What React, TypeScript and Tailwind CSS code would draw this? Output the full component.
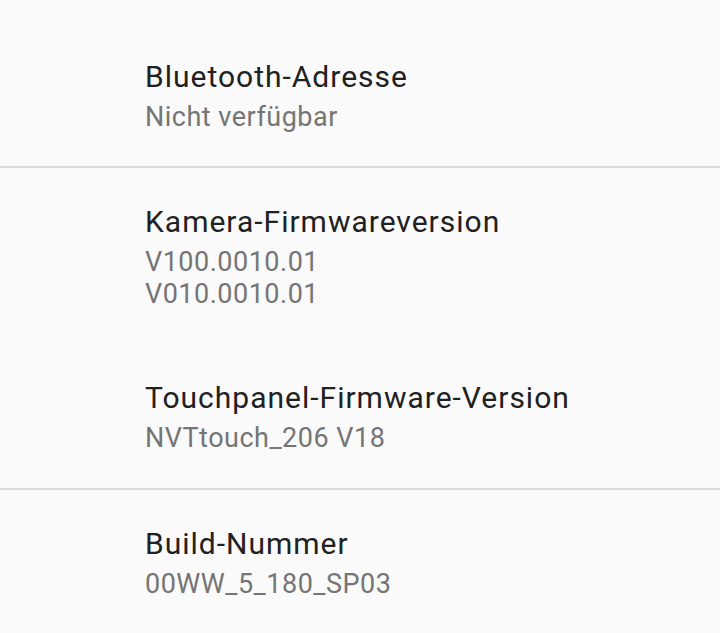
import { FC } from 'react';

type Item = {
  title: string;
  lines: string[];
};

const groups: Item[][] = [
  [{ title: 'Bluetooth-Adresse', lines: ['Nicht verfügbar'] }],
  [
    { title: 'Kamera-Firmwareversion', lines: ['V100.0010.01', 'V010.0010.01'] },
    { title: 'Touchpanel-Firmware-Version', lines: ['NVTtouch_206 V18'] },
  ],
  [{ title: 'Build-Nummer', lines: ['00WW_5_180_SP03'] }],
];

const Row: FC<{ item: Item; first?: boolean }> = ({ item, first }) => {
  return (
    <div className={first ? 'pl-[145px] pt-[57px] pb-[33px]' : 'pl-[145px] py-[34px]'}>
      <p className="text-[30px] leading-[40px] tracking-[1px] text-[#212121]">{item.title}</p>
      <div className="mt-[4px] flex flex-col">
        {item.lines.map((line) => (
          <p key={line} className="text-[27px] leading-[32px] tracking-[0.5px] text-[#757575]">
            {line}
          </p>
        ))}
      </div>
    </div>
  );
};

const App: FC = () => {
  return (
    <div
      className="h-[633px] w-[720px] overflow-hidden bg-[#fafafa]"
      style={{ fontFamily: 'Roboto, "Noto Sans", sans-serif' }}
    >
      {groups.map((group, gi) => (
        <div key={gi} className={gi > 0 ? 'border-t-2 border-[#d9d9d9]' : ''}>
          {group.map((item, ii) => (
            <Row key={item.title} item={item} first={gi === 0 && ii === 0} />
          ))}
        </div>
      ))}
    </div>
  );
};

export default App;
